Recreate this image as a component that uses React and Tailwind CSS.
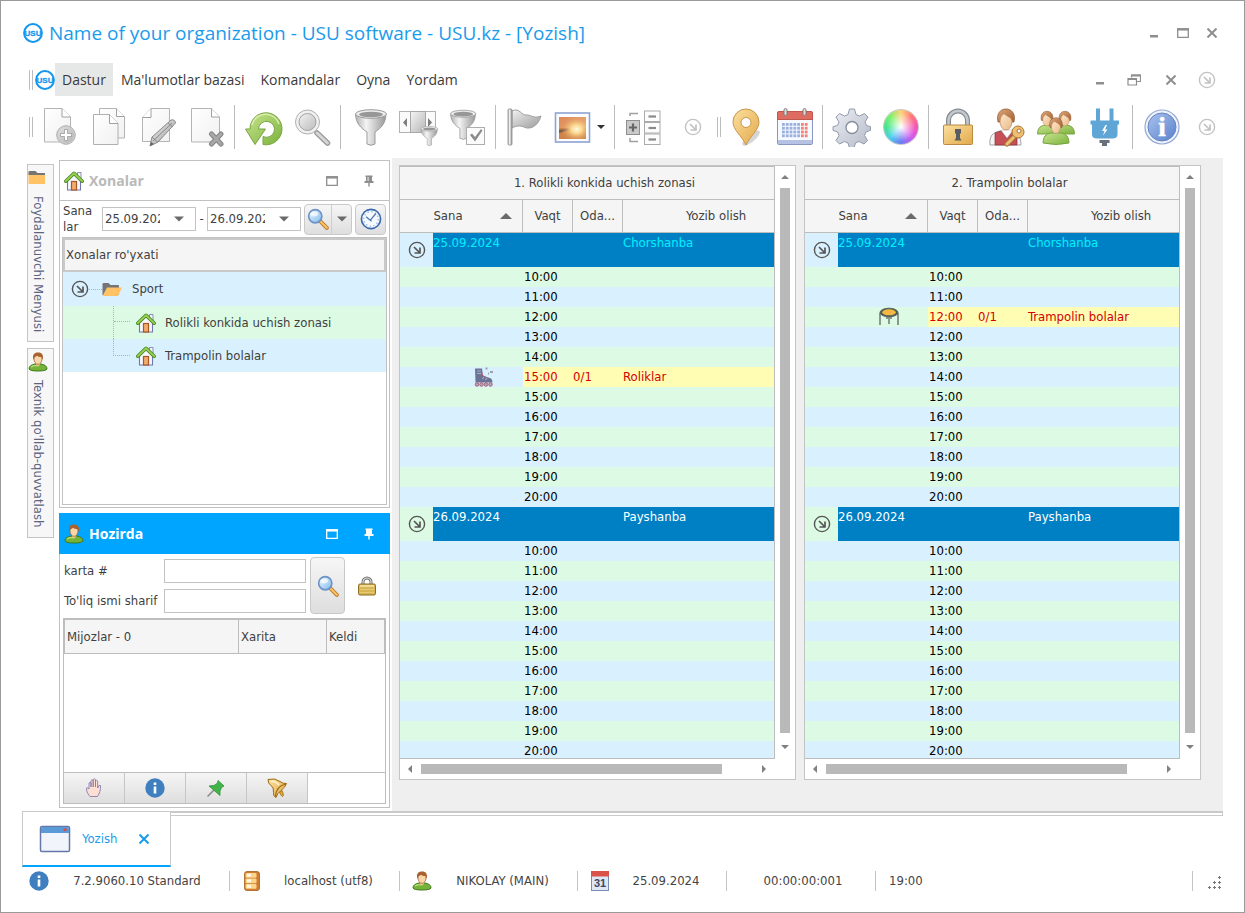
import clsx from "clsx";

const groups = [
  { date: "25.09.2024", day: "Chorshanba", current: true },
  { date: "26.09.2024", day: "Payshanba", current: false }
];

const hours = ["10:00", "11:00", "12:00", "13:00", "14:00", "15:00", "16:00", "17:00", "18:00", "19:00", "20:00"];

const tree = [
  { label: "Rolikli konkida uchish zonasi", color: "bg-[#ddfbe4]" },
  { label: "Trampolin bolalar", color: "bg-[#d9f1ff]" }
];

const INK = "#8e8e8e";

function Logo({ className }) {
  return (
    <svg viewBox="0 0 20 20" className={className}>
      <circle cx="10" cy="10" r="8.900" fill="#fff" stroke="#1397ee" strokeWidth="2" />
      <text x="10" y="13" textAnchor="middle" fontSize="8" fontWeight="700" fontFamily="Liberation Sans, sans-serif" fill="#1397ee" stroke="#1397ee" strokeWidth="0.300">USU</text>
    </svg>
  );
}

// Gradients shared by all the toolbar and panel icons
function Gradients() {
  const list = {
    page: ["#ffffff", "#f1f1f1"],
    steel: ["#f2f2f2", "#9a9a9a"],
    green: ["#c9e58f", "#7bb23c"],
    gold: ["#fbe0a0", "#e3a94a"],
    blue: ["#a9c4ee", "#5a80cc"],
    gear: ["#eceef3", "#b4bac8"],
    glass: ["#f4faff", "#7db9ec"],
    hair: ["#d9a577", "#a86436"],
    skin: ["#ffe9cd", "#e8b988"],
    sky: ["#dd8a5a", "#f3c083"]
  };
  return (
    <defs>
      {Object.entries(list).map(([id, [from, to]]) => (
        <linearGradient key={id} id={id} x1="0" y1="0" x2="1" y2="1">
          <stop offset="0" stopColor={from} />
          <stop offset="1" stopColor={to} />
        </linearGradient>
      ))}
      <linearGradient id="metal" x1="0" x2="1">
        <stop offset="0" stopColor="#b0b0b0" />
        <stop offset="0.35" stopColor="#f4f4f4" />
        <stop offset="1" stopColor="#989898" />
      </linearGradient>
      <radialGradient id="sun" cx="0.65" cy="0.55" r="0.6">
        <stop offset="0" stopColor="#fffbe0" />
        <stop offset="0.35" stopColor="#fbd58c" />
        <stop offset="1" stopColor="#d98250" stopOpacity="0.2" />
      </radialGradient>
    </defs>
  );
}

function Tool({ children }) {
  return <svg viewBox="0 0 40 40" className="h-10 w-10 shrink-0">{children}</svg>;
}

const NewIcon = () => (
  <Tool>
    <path d="M4.500 1.500h17.500l8.500 8.500v25h-26z" fill="url(#page)" stroke="#b4b4b4" />
    <path d="M22 1.500v8.500h8.500" fill="#fff" stroke="#a0a0a0" />
    <circle cx="26" cy="28" r="9.300" fill="#cfcfcf" stroke="#b0b0b0" />
    <circle cx="26" cy="28" r="8" fill="url(#steel)" fillOpacity="0.500" />
    <path d="M24.500 22.500h3v4h4v3h-4v4h-3v-4h-4v-3h4z" fill="#fff" stroke="#9a9a9a" strokeWidth="0.800" />
  </Tool>
);

const CopyIcon = () => (
  <Tool>
    <path d="M10.500 1.500h17l8 8v21.500h-25z" fill="url(#page)" stroke="#b4b4b4" />
    <path d="M27.500 1.500v8h8" fill="#fff" stroke="#a0a0a0" />
    <path d="M4.500 7.500h16l8.500 9v21h-24.500z" fill="url(#page)" stroke="#b0b0b0" />
    <path d="M20.500 7.500v9h8.500" fill="#fff" stroke="#a0a0a0" />
  </Tool>
);

const EditIcon = () => (
  <Tool>
    <path d="M13 1.500h18.500v33h-27v-24z" fill="url(#page)" stroke="#b4b4b4" />
    <path d="M13 1.500v9h-8.500" fill="#fff" stroke="#a0a0a0" />
    <path d="M12 39l2-9 19-17q4-1 4.500 3l-17.500 19z" fill="url(#steel)" stroke="#8a8a8a" />
    <path d="M15 34l19-18M14 30l5.500 5M30 16l5 4" fill="none" stroke="#808080" strokeWidth="0.900" />
    <path d="M12 39l1-4 3 2z" fill="#666" />
  </Tool>
);

const DeleteIcon = () => (
  <Tool>
    <path d="M4.500 1.500h20l8 8.500v25h-28z" fill="url(#page)" stroke="#b4b4b4" />
    <path d="M24.500 1.500v8.500h8" fill="#fff" stroke="#a0a0a0" />
    <path d="M24.500 27l9.500 10M34 27l-9.500 10" stroke="#858585" strokeWidth="5" strokeLinecap="round" />
    <path d="M24.500 27l9.500 10M34 27l-9.500 10" stroke="#a8a8a8" strokeWidth="3" strokeLinecap="round" />
  </Tool>
);

const RefreshIcon = () => (
  <Tool>
    <path d="M6 22A16 16 0 1 1 19 37.500v-8A8 8 0 1 0 14.500 22h7L11 37.500 1.500 22z" fill="url(#green)" stroke="#79a544" strokeLinejoin="round" />
    <path d="M8 18A14 14 0 0 1 35 17" fill="none" stroke="#e3f4bd" strokeWidth="1.500" opacity="0.800" />
  </Tool>
);

const SearchIcon = () => (
  <Tool>
    <path d="M24 26l10.500 10" stroke="#9a9a9a" strokeWidth="5.500" strokeLinecap="round" />
    <path d="M24 26l10.500 10" stroke="#d6d6d6" strokeWidth="3" strokeLinecap="round" />
    <circle cx="14.500" cy="15" r="12" fill="#f0f0f0" stroke="#b0b0b0" />
    <circle cx="14.500" cy="15" r="8.500" fill="url(#steel)" fillOpacity="0.600" stroke="#a2a2a2" />
  </Tool>
);

const FunnelShape = () => (
  <>
    <path d="M5.500 7C6 17 11 21 17 25v12q4 2.500 8 0V25c6-4 10.500-8 11-18z" fill="url(#metal)" stroke="#9b9b9b" />
    <ellipse cx="21" cy="7" rx="15.500" ry="4.300" fill="#ededed" stroke="#9b9b9b" />
    <ellipse cx="21" cy="7.500" rx="12" ry="2.800" fill="#979797" />
  </>
);

const FunnelIcon = () => (
  <Tool>
    <FunnelShape />
  </Tool>
);

const ColumnsFilterIcon = () => (
  <Tool>
    <rect x="0.500" y="4.500" width="36" height="21" fill="#fafafa" stroke="#b2b2b2" />
    <rect x="11.500" y="4.500" width="15" height="21" fill="url(#steel)" fillOpacity="0.700" stroke="#a8a8a8" />
    <path d="M8 11v9l-4-4.500zM29 11v9l4-4.500z" fill="#7d7d7d" />
    <g transform="translate(19 18) scale(0.540)">
      <FunnelShape />
    </g>
  </Tool>
);

const FunnelCheckIcon = () => (
  <Tool>
    <g transform="translate(-2 1) scale(0.820)">
      <FunnelShape />
    </g>
    <rect x="18.500" y="20.500" width="18" height="17" fill="#fbfbfb" stroke="#adadad" />
    <path d="M22 28l2-1.500 3 3.500 6-8 1.500 1.500-7.500 11z" fill="#8c8c8c" />
  </Tool>
);

const FlagIcon = () => (
  <Tool>
    <path d="M7 4c8-4 9 5 15 4 5 0 6 4 14 1-3 11-12 14-17 11-5-2-8-1-12 1z" fill="url(#steel)" stroke="#a0a0a0" />
    <rect x="3" y="2" width="4" height="36" rx="1" fill="url(#metal)" stroke="#8a8a8a" strokeWidth="0.800" />
  </Tool>
);

const ImageIcon = () => (
  <Tool>
    <rect x="2.500" y="6" width="34" height="29" fill="#fdfdff" stroke="#8ea3d3" strokeWidth="1.600" />
    <rect x="6" y="10" width="27" height="22" fill="url(#sky)" />
    <rect x="6" y="21" width="27" height="11" fill="#cb8445" />
    <path d="M6 23q8-3 12 0l-12 3z" fill="#65513f" />
    <rect x="6" y="10" width="27" height="22" fill="url(#sun)" />
  </Tool>
);

const TreeIcon = () => (
  <Tool>
    <path d="M6 9V6.500h8M6 31v3.500h8" fill="none" stroke="#a0a0a0" strokeWidth="1.500" />
    <rect x="2.500" y="13.500" width="13" height="14" fill="#c9c9c9" stroke="#8f8f8f" />
    <path d="M9 16.500v8M5 20.500h8" stroke="#666" strokeWidth="2.200" />
    {[4, 15.5, 27].map(y => (
      <g key={y}>
        <rect x="20.500" y={y} width="15.500" height="10.500" fill="#fdfdfd" stroke="#aaa" />
        <path d={`M24.500 ${y + 5.5}h7.500`} stroke="#8a8a8a" strokeWidth="2.200" />
      </g>
    ))}
  </Tool>
);

const PinMapIcon = () => (
  <Tool>
    <ellipse cx="25" cy="31" rx="11" ry="4" fill="#888" opacity="0.350" transform="rotate(-40 25 31)" />
    <path d="M20 38C16 29 7 23 7 15a13 13 0 0 1 26 0c0 8-9 14-13 23z" fill="url(#gold)" stroke="#c9954a" />
    <circle cx="20" cy="15.500" r="5" fill="#fff" stroke="#c9954a" />
  </Tool>
);

const CalendarIcon = () => (
  <Tool>
    <rect x="2.500" y="4.500" width="35" height="33" rx="1.500" fill="#f6f9ff" stroke="#8996bd" />
    <path d="M2.500 12.500v-6.500q0-1.500 1.500-1.500h32q1.500 0 1.500 1.500v6.500z" fill="#df6c60" stroke="#c0564c" />
    <rect x="3" y="33" width="34" height="4" fill="#b5c2e4" />
    {[8, 27].map(x => (
      <rect key={x} x={x + 1} y="1.500" width="3" height="7" rx="1.500" fill="#ddd" stroke="#777" strokeWidth="0.900" />
    ))}
    {[0, 1, 2, 3].map(r => [0, 1, 2, 3, 4, 5, 6].map(c => (
      <rect key={`${r}${c}`} x={7 + c * 3.8} y={16 + r * 3.8} width="2.800" height="2.800" fill={c > 4 ? "#ef8474" : "#9cb0dd"} />
    )))}
  </Tool>
);

const GearIcon = () => (
  <Tool>
    <path d="M17.500 2h5l1.500 5.500 3.500 1.500 5-2.500 3.500 3.500-3 5 1.500 3.500 4 1.200v3.600l-4.500 1.700-1.500 3.500 3 5-3.500 3.500-5-2.500-3.500 1.500-1.500 5h-4.500l-1.500-5-3.500-1.500-5 2.500-3.500-3.500 3-5-1.500-3.500-4.500-1.700v-3.600l4.500-1.200 1.500-3.500-3-5 3.500-3.500 5 2.500 3.500-1.500z" fill="url(#gear)" stroke="#929aab" strokeLinejoin="round" />
    <circle cx="20" cy="20.500" r="6" fill="#fff" stroke="#848c9e" strokeWidth="1.300" />
  </Tool>
);

const LockIcon = () => (
  <Tool>
    <path d="M10.500 18v-4.500a9.500 9.500 0 0 1 19 0v4.500" fill="none" stroke="#868b92" strokeWidth="5" />
    <path d="M10.500 18v-4.500a9.500 9.500 0 0 1 19 0v4.500" fill="none" stroke="#c3c8ce" strokeWidth="2.500" />
    <rect x="5.500" y="18" width="29" height="19.500" rx="1" fill="url(#gold)" stroke="#b98a3f" />
    <path d="M17 22h6v4l-1 1v4l1.500 2.500h-7l1.500-2.500v-4l-1-1z" fill="#595c60" />
  </Tool>
);

const Head = ({ x, y, s = 1 }) => (
  <g transform={`translate(${x} ${y}) scale(${s})`}>
    <path d="M-8 2C-10-7-5-11 0-11S10-7 8 2z" fill="url(#hair)" stroke="#915a32" strokeWidth="0.800" />
    <ellipse cx="0" cy="1.500" rx="6" ry="8.500" fill="url(#skin)" stroke="#b48357" strokeWidth="0.700" />
    <path d="M-7 1C-7-3-5-4-2-6 1-3 5-3 6.500 1 8.500-5 6-10 0-10S-9-6-7 1z" fill="url(#hair)" />
  </g>
);

const UserKeyIcon = () => (
  <Tool>
    <path d="M3 38c-1-9 3-13 10-14h12c6 1 9 6 9 14z" fill="#f4f4f6" stroke="#a3a3aa" />
    <path d="M8 38v-12l6-2 6 7 6-7 4 2v12z" fill="#c64e57" stroke="#8d2e36" strokeWidth="0.700" />
    <path d="M14 23l6 8 6-8z" fill="#fff" stroke="#bbb" strokeWidth="0.600" />
    <Head x={19} y={13} />
    <path d="M20 37l9-9" stroke="#a97632" strokeWidth="5" strokeLinecap="round" />
    <path d="M20 37l9-9" stroke="#eebf74" strokeWidth="3" strokeLinecap="round" />
    <circle cx="31" cy="25" r="6" fill="#eebf74" stroke="#a97632" />
    <circle cx="32" cy="24" r="2" fill="#fff" stroke="#a97632" />
  </Tool>
);

const UsersIcon = () => (
  <Tool>
    <path d="M1.500 27q0-9 9-9t9 9zM20.500 27q0-9 9-9t9 9z" fill="url(#green)" stroke="#79a544" />
    <Head x={11} y={12} s={0.7} />
    <Head x={29} y={12} s={0.7} />
    <path d="M7 36q0-9 8-10h10q8 1 8 10-13 3-26 0z" fill="url(#green)" stroke="#79a544" />
    <Head x={20} y={19} s={0.75} />
  </Tool>
);

const PlugIcon = () => (
  <Tool>
    <path d="M11 1.500h4v12h9.500v-12h4v12h5.500v4h-1.500v10q0 4-5 4h-15.500q-5 0-5-4v-10h-1.500v-4h5.500z" fill="#5fa5d5" />
    <path d="M14.500 33h10v3h-2.500v3h-5v-3h-2.500z" fill="#66717b" />
    <path d="M20.500 18l-3.500 6h2.500l-1.500 4.500 4.500-6h-2.500l2-4.500z" fill="#fff" />
  </Tool>
);

const InfoIcon = () => (
  <Tool>
    <circle cx="20" cy="20" r="17" fill="#eff3fb" stroke="#94a9d6" strokeWidth="1.200" />
    <circle cx="20" cy="20" r="14" fill="url(#blue)" stroke="#6684c2" />
    <text x="20" y="29" textAnchor="middle" fontSize="27" fontWeight="700" fontFamily="Liberation Serif, serif" fill="#fff" stroke="#fff" strokeWidth="0.600">i</text>
  </Tool>
);

const ColorWheel = () => (
  <span className="h-9 w-9 rounded-full border border-[#c9c9c9] bg-[radial-gradient(circle,white_0%,transparent_60%),conic-gradient(#ffd27a,#f77,#f455b8,#d05cf0,#6b7cf5,#4cd0ee,#46e58e,#7cf36a,#ffd27a)]" />
);

function ExpandCircle({ className, color = "#c2c2c2" }) {
  return (
    <svg viewBox="0 0 18 18" className={clsx("h-[18px] w-[18px] shrink-0", className)} fill="none" stroke={color}>
      <circle cx="9" cy="9" r="7.600" strokeWidth="1.400" />
      <path d="M6 6l5.500 5.500M12 6.500V12H6.500" strokeWidth="1.700" />
    </svg>
  );
}

function Small({ className = "h-5 w-5", children }) {
  return <svg viewBox="0 0 20 20" className={clsx("shrink-0", className)}>{children}</svg>;
}

const HouseIcon = () => (
  <Small>
    <path d="M13.500 1.500h3.500v7l-3.500-3z" fill="#f4f4fb" stroke="#7f83ae" strokeWidth="0.900" />
    <path d="M3.500 9.500l6.500-6 6.500 6v9.500h-13z" fill="#f7f8fd" stroke="#6f77ad" strokeWidth="1.100" />
    <rect x="7.500" y="10.500" width="5" height="8.500" fill="#efae6c" stroke="#a9552a" strokeWidth="1.200" />
    <path d="M1.800 10.200L10 2.300l8.200 7.900" fill="none" stroke="#4b8a24" strokeWidth="3.600" strokeLinejoin="round" strokeLinecap="round" />
    <path d="M1.800 10.200L10 2.300l8.200 7.900" fill="none" stroke="#9ad054" strokeWidth="1.800" strokeLinecap="round" />
  </Small>
);

const UserIcon = () => (
  <Small>
    <path d="M1 17q0-4 6-5h6q6 1 6 5-1 2-9 2t-9-2z" fill="#74b238" stroke="#3f7a1e" />
    <path d="M3 15q3-2 7-1" stroke="#b9e07d" strokeWidth="1.200" fill="none" />
    <path d="M8 10h4v3l-2 1.500-2-1.500z" fill="#f0c18e" />
    <ellipse cx="10" cy="7" rx="4" ry="5.300" fill="#f9d6aa" stroke="#9c5b2d" strokeWidth="0.700" />
    <path d="M5.500 8C4 3 6 0.500 10 0.500S16 3 14.500 8L13.500 5Q11 5.500 9 3.800 7.500 5 6.500 5z" fill="#a8612f" />
  </Small>
);

const FolderIcon = ({ open }) => (
  <Small>
    <path d="M0.500 16V5q0-1 1-1h5l2 2H16q1 0 1 1v9z" fill={open ? "#757575" : "#ffc265"} />
    {open
      ? <path d="M0.500 17L5 8.500h15L16 17z" fill="#ffc265" />
      : <path d="M0.500 7V4q0-1 1-1h6l2 2H17v2z" fill="#757575" />}
  </Small>
);

const LensIcon = () => (
  <Small className="h-[22px] w-[22px]">
    <path d="M12 12l6 6" stroke="#b7772b" strokeWidth="3.600" strokeLinecap="round" />
    <path d="M12.500 12.500l5.500 5.500" stroke="#fbc163" strokeWidth="2" strokeLinecap="round" />
    <circle cx="7.500" cy="7.500" r="6" fill="url(#glass)" stroke="#6c92c6" strokeWidth="1.500" />
    <ellipse cx="6.500" cy="5.500" rx="3.500" ry="2.200" fill="#fff" opacity="0.700" />
  </Small>
);

const ClockIcon = () => (
  <Small className="h-[22px] w-[22px]">
    <circle cx="10" cy="10" r="8.700" fill="#f5faff" stroke="#3c69ae" strokeWidth="1.500" />
    <circle cx="10" cy="10" r="6.600" fill="none" stroke="#9dbde3" strokeWidth="1.400" strokeDasharray="1.200 2.256" />
    <path d="M14.500 5L9 11.500M5.500 8l5 4" stroke="#5378b8" strokeWidth="1.200" />
  </Small>
);

const SmallLockIcon = () => (
  <Small>
    <path d="M6 9V6a4 4 0 0 1 8 0V9" fill="none" stroke="#6e6e6e" strokeWidth="3" />
    <path d="M6 9V6a4 4 0 0 1 8 0V9" fill="none" stroke="#e0e0e0" strokeWidth="1.200" />
    <rect x="1.500" y="8" width="17" height="11" rx="1.500" fill="#d8b654" stroke="#8a6c22" />
    <path d="M3 10h14" stroke="#f6e6ac" strokeWidth="1.600" />
    <path d="M3 13.500h14M3 16.500h14" stroke="#e8cd7c" strokeWidth="0.900" />
  </Small>
);

const HandIcon = () => (
  <Small>
    <path d="M6 18.500C3 15 2.500 13 2.500 10q1.500-1 2.500 1V5q1-1.500 2 0V9 2.500q1.200-1.500 2.200 0V9 1.500q1.200-1.500 2.300 0V9 3q1.200-1.500 2.200 0v7q1-3.500 2.800-2.500c.5 4-1 8-3 11z" fill="#fbdfd3" stroke="#8a7cae" strokeWidth="0.900" />
  </Small>
);

const BlueInfoIcon = () => (
  <Small>
    <circle cx="10" cy="10" r="9.700" fill="#3f7fbf" />
    <path d="M8.700 8.500h2.600v7H8.700zM8.700 4.500h2.600v2.500H8.700z" fill="#fff" />
  </Small>
);

const GreenPinIcon = () => (
  <Small>
    <path d="M1.500 18.500l6.500-6.500" stroke="#8b8b8b" strokeWidth="1.600" />
    <path d="M12 2.500l6 5.500-2.500 1.500-1.500 3.500v4.500L3 8l5-.5 3.500-2.500z" fill="#43b449" stroke="#2d9338" strokeWidth="0.800" />
  </Small>
);

const BellIcon = () => (
  <Small>
    <path d="M1 1.500Q8-0.500 13 3.500q3 2.500 6.500 2-1 3.500-5.500 7-4 3-5 7-3-1-2.500-5Q7 9 4 7.500 1 5.500 1 1.500z" fill="url(#gold)" stroke="#9a6a14" />
    <path d="M19 6Q9 8 8.500 18.500" fill="none" stroke="#9a6a14" strokeWidth="1.100" />
    <path d="M12.500 14q1 3.500 3 4.500 1.500-1 .5-3.500l-1-2.500z" fill="#e8a82f" stroke="#9a6a14" strokeWidth="0.800" />
    <path d="M3.500 3.500Q8 2.500 12 7" stroke="#fff4cb" strokeWidth="1.500" fill="none" />
  </Small>
);

const DatabaseIcon = () => (
  <Small>
    <rect x="2.500" y="0.500" width="15" height="19" rx="2.500" fill="#cf7d33" stroke="#a5611f" strokeWidth="0.800" />
    {[2, 7.5, 13].map(y => (
      <g key={y}>
        <rect x="3.500" y={y} width="11" height="4.800" rx="1" fill="#ffd58c" />
        <rect x="5" y={y + 0.8} width="4" height="3" fill="#fff8e2" />
      </g>
    ))}
  </Small>
);

const DayIcon = () => (
  <Small>
    <rect x="1.500" y="0.500" width="17" height="19" fill="#dfe6f5" stroke="#7c8bb5" />
    <rect x="1" y="0" width="18" height="5.500" fill="#d9534a" />
    <text x="10" y="16" textAnchor="middle" fontSize="11" fontWeight="700" fontFamily="Liberation Sans, sans-serif" fill="#3b4662">31</text>
  </Small>
);

const SkateIcon = () => (
  <Small>
    <path d="M1 1.500h7l1 7 8 3q1.500 1 1.500 4H1.500z" fill="#6a7396" />
    <path d="M3 4h4M3 6.500h5M10 10l-1.500 2M13 11l-1.500 2" stroke="#a6afc8" strokeWidth="1.200" />
    <path d="M7 5l2 4 3 2" stroke="#c8545f" fill="none" />
    {[3, 7.5, 12, 16.5].map(x => (
      <circle key={x} cx={x} cy="17.500" r="1.800" fill="#b7a3b5" stroke="#a25168" strokeWidth="0.800" />
    ))}
    <path d="M11.500 1.500h2M16 5h3M14 6.500h1" stroke="#9aa1b3" strokeWidth="2" />
  </Small>
);

const TrampolineIcon = () => (
  <Small>
    <path d="M1 18V6M19 18V6M10 17V9M8 9v3M12 9v3" stroke="#68706c" strokeWidth="1.400" fill="none" />
    <ellipse cx="10" cy="5.500" rx="9" ry="4.300" fill="#4c5a55" stroke="#56625e" />
    <ellipse cx="10" cy="5.300" rx="6.800" ry="3" fill="#f5b843" />
  </Small>
);

const WindowIcon = () => (
  <svg viewBox="0 0 32 28" className="h-7 w-8 shrink-0">
    <rect x="1.500" y="1.500" width="29" height="25" rx="1.500" fill="#f1f4fb" stroke="#6577a8" strokeWidth="1.500" />
    <path d="M2 8V3.500Q2 2 3.500 2h25Q30 2 30 3.500V8z" fill="#5a9ad6" />
    <rect x="24.500" y="3.500" width="3" height="2.500" fill="#e3493c" />
  </svg>
);

const BoxGlyph = ({ color = INK }) => (
  <svg viewBox="0 0 12 10" className="h-[10px] w-3" fill="none" stroke={color}>
    <path d="M0.700 1v8.300h10.600V1" strokeWidth="1.300" />
    <path d="M0 1.300h12" strokeWidth="2.500" />
  </svg>
);

const PinGlyph = ({ color = INK }) => (
  <svg viewBox="0 0 10 12" className="h-3 w-[10px]" fill={color}>
    <path d="M1.500 0.500h7v1.500H8v4h1.500V8H5.700v3.500H4.300V8H0.500V6H2V2h-.5z" />
    <path d="M3.500 2h1.200v4H3.500z" fill="#fff" fillOpacity="0.700" />
  </svg>
);

const CrossGlyph = ({ color = INK }) => (
  <svg viewBox="0 0 10 10" className="h-[10px] w-[10px]" stroke={color} strokeWidth="2">
    <path d="M0.500 0.500l9 9M9.500 0.500l-9 9" />
  </svg>
);

const MinusGlyph = () => (
  <svg viewBox="0 0 10 10" className="h-[10px] w-[10px]">
    <path d="M1 7h8v2.500H1z" fill={INK} />
  </svg>
);

const RestoreGlyph = () => (
  <svg viewBox="0 0 14 12" className="h-3 w-[14px]" fill="none" stroke={INK} strokeWidth="1.200">
    <path d="M4.500 3.500V1h9v6.500H10" />
    <path d="M4.500 1.500h9M1 5h8.500" strokeWidth="2" />
    <path d="M1 4.500h8.500v6.500H1z" />
  </svg>
);

const arrows = {
  up: "M0 6l4-4 4 4z",
  down: "M0 2l4 4 4-4z",
  left: "M6 0L2 4l4 4z",
  right: "M2 0l4 4-4 4z"
};

function Arrow({ dir, className = "h-2 w-2", color = "#808080" }) {
  return (
    <svg viewBox="0 0 8 8" className={clsx("shrink-0", className)}>
      <path d={arrows[dir]} fill={color} />
    </svg>
  );
}

const toolbar = [
  { name: "New", icon: <NewIcon /> },
  { name: "Copy", icon: <CopyIcon /> },
  { name: "Edit", icon: <EditIcon /> },
  { name: "Delete", icon: <DeleteIcon /> },
  "sep",
  { name: "Refresh", icon: <RefreshIcon /> },
  { name: "Search", icon: <SearchIcon /> },
  "sep",
  { name: "Filter", icon: <FunnelIcon /> },
  { name: "Filter columns", icon: <ColumnsFilterIcon /> },
  { name: "Saved filter", icon: <FunnelCheckIcon /> },
  "sep",
  { name: "Flag", icon: <FlagIcon /> },
  { name: "Image", icon: <ImageIcon />, menu: true },
  "sep",
  { name: "Expand tree", icon: <TreeIcon /> },
  { name: "More", icon: <ExpandCircle /> },
  "grip",
  { name: "Map", icon: <PinMapIcon /> },
  { name: "Calendar", icon: <CalendarIcon /> },
  "sep",
  { name: "Settings", icon: <GearIcon /> },
  { name: "Colors", icon: <ColorWheel /> },
  "sep",
  { name: "Lock", icon: <LockIcon /> },
  { name: "Access", icon: <UserKeyIcon /> },
  { name: "Users", icon: <UsersIcon /> },
  { name: "Connection", icon: <PlugIcon /> },
  "sep",
  { name: "Info", icon: <InfoIcon /> }
];

const Grip = ({ className }) => <span className={clsx("w-[4px] shrink-0 border-x border-[#bdbdbd]", className)} />;

function TitleBar() {
  return (
    <header className="flex h-[62px] shrink-0 items-center pl-[22px] pr-[27px] pt-[2px]">
      <svg className="h-0 w-0"><Gradients /></svg>
      <Logo className="mr-[6px] h-5 w-5" />
      <h1 className="flex-1 font-['Open_Sans',sans-serif] text-[19px] leading-6 text-[#1a9bec]">
        Name of your organization - USU software - USU.kz - [Yozish]
      </h1>
      <div className="flex items-center gap-[18px]">
        <button aria-label="Minimize"><MinusGlyph /></button>
        <button aria-label="Maximize"><BoxGlyph /></button>
        <button aria-label="Close"><CrossGlyph /></button>
      </div>
    </header>
  );
}

function MenuBar() {
  return (
    <nav className="flex h-[33px] shrink-0 items-center pl-7 pr-[28px] font-['Open_Sans',sans-serif] text-sm text-[#3a3a3a]">
      <Grip className="mr-[2px] h-5" />
      <Logo className="h-5 w-5" />
      <button className="h-full bg-[#e6e8e8] px-[7px]">Dastur</button>
      <button className="h-full px-2">Ma'lumotlar bazasi</button>
      <button className="h-full px-2">Komandalar</button>
      <button className="h-full px-2">Oyna</button>
      <button className="h-full px-2">Yordam</button>
      <div className="ml-auto flex items-center gap-[22px]">
        <button aria-label="Minimize document"><MinusGlyph /></button>
        <button aria-label="Restore document"><RestoreGlyph /></button>
        <button aria-label="Close document" className="ml-[3px]"><CrossGlyph /></button>
        <button aria-label="Menu options"><ExpandCircle /></button>
      </div>
    </nav>
  );
}

function Toolbar() {
  return (
    <div className="flex h-[62px] shrink-0 items-center pl-7 pr-[28px]">
      <Grip className="mr-[2px] h-5" />
      {toolbar.map((item, i) => {
        if (item === "sep") return <span key={i} className="ml-[3px] mr-1 h-11 w-px shrink-0 bg-[#bcbcbc]" />;
        if (item === "grip") return <Grip key={i} className="h-5" />;
        return (
          <button key={i} aria-label={item.name} className={clsx("flex h-12 shrink-0 items-center", item.menu ? "w-[62px] gap-1 pl-1" : "w-[49px] justify-center")}>
            {item.icon}
            {item.menu && <Arrow dir="down" color="#333" />}
          </button>
        );
      })}
      <button aria-label="More buttons" className="ml-auto"><ExpandCircle /></button>
    </div>
  );
}

function SideTabs() {
  return (
    <div className="flex w-[27px] shrink-0 flex-col gap-[6px] pt-[6px] text-[13px] text-[#5d6480]">
      <button className="flex h-[178px] w-[27px] flex-col items-start border border-[#c4c4c4] bg-[#f7f7f7] pt-[3px]">
        <FolderIcon />
        <span className="mt-2 whitespace-nowrap [writing-mode:vertical-rl]">Foydalanuvchi Menyusi</span>
      </button>
      <button className="flex h-[190px] w-[27px] flex-col items-start border border-[#c4c4c4] bg-[#f7f7f7] pt-[3px]">
        <UserIcon />
        <span className="mt-2 whitespace-nowrap [writing-mode:vertical-rl]">Texnik qo'llab-quvvatlash</span>
      </button>
    </div>
  );
}

function DateField({ id, label, value }) {
  return (
    <div className="flex h-6 w-[94px] items-center border border-[#c3c3c3] bg-white px-[2px]">
      <input id={id} aria-label={label} defaultValue={value} className="w-[55px] min-w-0 bg-transparent outline-none" />
      <button aria-label="Open calendar" className="flex flex-1 justify-center pl-1"><Arrow dir="down" className="h-[10px] w-[10px]" color="#6a6a6a" /></button>
    </div>
  );
}

function RoomsPanel() {
  return (
    <section className="flex min-h-0 flex-1 flex-col border border-[#c1c1c1] bg-white">
      <div className="flex h-[39px] shrink-0 items-center pl-1 pr-[15px]">
        <HouseIcon />
        <h2 className="ml-[5px] flex-1 font-['Open_Sans',sans-serif] text-sm font-bold text-[#b9b9b9]">Xonalar</h2>
        <button aria-label="Maximize panel"><BoxGlyph /></button>
        <button aria-label="Pin panel" className="ml-[26px]"><PinGlyph /></button>
      </div>
      <div className="flex h-[37px] shrink-0 items-center overflow-hidden border-t border-[#c1c1c1] pl-[3px]">
        <label htmlFor="from" className="w-[39px] shrink-0 leading-4">Sana lar</label>
        <DateField id="from" label="Sanadan" value="25.09.2024" />
        <span className="w-[11px] shrink-0 text-center">-</span>
        <DateField id="to" label="Sanagacha" value="26.09.2024" />
        <div className="ml-[3px] flex h-[31px] shrink-0 rounded-sm border border-[#c9c9c9] bg-linear-to-b from-[#f6f6f6] to-[#dedede]">
          <button aria-label="Qidirish" className="flex w-[27px] items-center justify-center border-r border-[#cfcfcf]"><LensIcon /></button>
          <button aria-label="Qidirish menyusi" className="flex w-[19px] items-center justify-center"><Arrow dir="down" className="h-[10px] w-[10px]" color="#6a6a6a" /></button>
        </div>
        <button aria-label="Vaqt" className="ml-[3px] flex h-[31px] w-[31px] shrink-0 items-center justify-center rounded-sm border border-[#c9c9c9] bg-linear-to-b from-[#f6f6f6] to-[#dedede]"><ClockIcon /></button>
      </div>
      <div className="mx-[2px] mb-[2px] min-h-0 flex-1 border border-[#c1c1c1]">
        <div className="flex h-[34px] items-center border-2 border-[#c9c9c9] bg-[#f5f5f5] px-px">Xonalar ro'yxati</div>
        <ul>
          <li>
            <div className="flex h-[34px] items-center bg-[#d9f1ff] pl-2">
              <ExpandCircle color="#555" />
              <span className="w-[13px] border-t border-dotted border-[#a9b4ba]" />
              <FolderIcon open />
              <span className="ml-[10px]">Sport</span>
            </div>
            <ul>
              {tree.map((node, i) => (
                <li key={node.label} className={clsx("flex h-[33px] items-center pl-[50px]", node.color)}>
                  <span className={clsx("w-[17px] self-stretch border-l border-dotted border-[#a9b4ba]", i === tree.length - 1 && "mb-4 border-b")}>
                    {i < tree.length - 1 && <span className="block h-4 border-b border-dotted border-[#a9b4ba]" />}
                  </span>
                  <span className="ml-[6px]"><HouseIcon /></span>
                  <span className="ml-[9px]">{node.label}</span>
                </li>
              ))}
            </ul>
          </li>
        </ul>
      </div>
    </section>
  );
}

function NowPanel() {
  const actions = [
    { name: "To'xtatish", icon: <HandIcon /> },
    { name: "Ma'lumot", icon: <BlueInfoIcon /> },
    { name: "Biriktirish", icon: <GreenPinIcon /> },
    { name: "Eslatma", icon: <BellIcon /> }
  ];
  return (
    <section className="flex h-[295px] shrink-0 flex-col border border-[#c1c1c1] bg-white">
      <div className="-mx-px -mt-px flex h-[41px] shrink-0 items-center bg-[#00a5ff] pl-[5px] pr-4 text-white">
        <UserIcon />
        <h2 className="ml-[5px] flex-1 font-['Open_Sans',sans-serif] text-sm font-bold">Hozirda</h2>
        <button aria-label="Maximize panel"><BoxGlyph color="#fff" /></button>
        <button aria-label="Pin panel" className="ml-[26px]"><PinGlyph color="#fff" /></button>
      </div>
      <div className="flex items-start px-1 pt-[3px]">
        <div className="grid grid-cols-[100px_142px] items-center gap-y-[6px] pt-[2px]">
          <label htmlFor="card">karta #</label>
          <input id="card" className="h-6 border border-[#c3c3c3] px-1 outline-none" />
          <label htmlFor="name" className="whitespace-nowrap">To'liq ismi sharif</label>
          <input id="name" className="h-6 border border-[#c3c3c3] px-1 outline-none" />
        </div>
        <button aria-label="Qidirish" className="ml-1 flex h-[57px] w-[35px] items-center justify-center rounded-sm border border-[#c9c9c9] bg-linear-to-b from-[#f6f6f6] to-[#dedede]"><LensIcon /></button>
        <button aria-label="Bloklash" className="ml-3 flex h-[57px] items-center"><SmallLockIcon /></button>
      </div>
      <div className="mx-[3px] mt-1 min-h-0 flex-1 border border-[#bdbdbd]">
        <table className="w-full table-fixed border-collapse">
          <thead>
            <tr className="h-[34px] bg-[#f5f5f5] text-left">
              <th className="w-[174px] border border-[#bdbdbd] px-[2px] font-normal">Mijozlar - 0</th>
              <th className="w-[88px] border border-[#bdbdbd] px-[2px] font-normal">Xarita</th>
              <th className="border border-[#bdbdbd] px-[2px] font-normal">Keldi</th>
            </tr>
          </thead>
        </table>
      </div>
      <div className="mx-[3px] mb-[3px] flex h-[31px] shrink-0 border border-t-0 border-[#bdbdbd]">
        {actions.map(action => (
          <button key={action.name} aria-label={action.name} className="flex w-[61px] items-center justify-center border-r border-[#c6c6c6] bg-linear-to-b from-[#f5f5f5] to-[#dedede]">
            {action.icon}
          </button>
        ))}
      </div>
    </section>
  );
}

function ScheduleRows({ bookAt, bookTitle, bookIcon }) {
  const rows = [];
  let stripe = 0;
  const next = () => (stripe++ % 2 === 0 ? "bg-[#d9f1ff]" : "bg-[#ddfbe4]");

  groups.forEach(group => {
    const color = group.current ? "text-[#00f0ff]" : "text-white";
    rows.push(
      <tr key={group.date} className={clsx("h-[34px]", next())}>
        <td className="w-[33px] p-0 pl-2 align-middle">
          <button aria-label={`Yopish ${group.date}`} className="flex"><ExpandCircle color="#555" /></button>
        </td>
        <td colSpan={3} className={clsx("bg-[#0080c4] p-0 align-top leading-5", color)}>{group.date}</td>
        <td className={clsx("bg-[#0080c4] p-0 align-top leading-5", color)}>{group.day}</td>
      </tr>
    );
    hours.forEach(hour => {
      if (group.current && hour === bookAt) {
        rows.push(
          <tr key={group.date + hour + "b"} className={clsx("h-5 leading-5 text-[#d40000]", next())}>
            <td className="p-0" />
            <td className="p-0 pl-[41px]"><span className="flex">{bookIcon}</span></td>
            <td className="bg-[#fffcb4] p-0 pl-px">{hour}</td>
            <td className="bg-[#fffcb4] p-0">0/1</td>
            <td className="bg-[#fffcb4] p-0">{bookTitle}</td>
          </tr>
        );
      }
      rows.push(
        <tr key={group.date + hour} className={clsx("h-5 leading-5 text-black", next())}>
          <td className="p-0" />
          <td className="p-0" />
          <td className="p-0 pl-px">{hour}</td>
          <td className="p-0" />
          <td className="p-0" />
        </tr>
      );
    });
  });
  return <tbody>{rows}</tbody>;
}

function Schedule({ title, bookAt, bookTitle, bookIcon }) {
  return (
    <section className="grid w-[397px] shrink-0 grid-cols-[minmax(0,1fr)_20px] grid-rows-[minmax(0,1fr)_20px] border border-[#c4c4c4] bg-white">
      <div className="overflow-hidden border-b border-r border-[#bdbdbd]">
        <table className="w-[409px] table-fixed border-separate border-spacing-0">
          <colgroup>
            <col className="w-[33px]" />
            <col className="w-[90px]" />
            <col className="w-[50px]" />
            <col className="w-[50px]" />
            <col className="w-[186px]" />
          </colgroup>
          <thead>
            <tr className="h-[34px] bg-[#f5f5f5]">
              <th colSpan={5} className="border-b border-t border-[#bdbdbd] p-0 font-normal">{title}</th>
            </tr>
            <tr className="h-[33px] bg-[#f5f5f5]">
              <th colSpan={2} className="border-b border-r border-[#bdbdbd] p-0 font-normal">
                <span className="flex items-center pr-[10px]">
                  <span className="flex-1 pr-1">Sana</span>
                  <Arrow dir="up" className="h-3 w-3" color="#6a6a6a" />
                </span>
              </th>
              <th className="border-b border-r border-[#bdbdbd] p-0 font-normal">Vaqt</th>
              <th className="border-b border-r border-[#bdbdbd] p-0 font-normal">Oda...</th>
              <th className="border-b border-[#bdbdbd] p-0 font-normal">Yozib olish</th>
            </tr>
          </thead>
          <ScheduleRows bookAt={bookAt} bookTitle={bookTitle} bookIcon={bookIcon} />
        </table>
      </div>
      <div className="flex flex-col items-center pb-2 pt-[7px]">
        <Arrow dir="up" />
        <span className="mb-[10px] mt-[7px] w-[10px] flex-1 bg-[#b9b9b9]" />
        <Arrow dir="down" />
      </div>
      <div className="flex items-center pl-[6px] pr-[7px]">
        <Arrow dir="left" />
        <span className="ml-[7px] mr-[38px] h-[10px] flex-1 bg-[#b9b9b9]" />
        <Arrow dir="right" />
      </div>
    </section>
  );
}

function DocumentTabs() {
  return (
    <div className="mx-[21px] h-14 shrink-0">
      <div className="flex items-start">
        <div className="flex h-14 w-[149px] items-center border-x border-b-2 border-t border-[#c9c9c9] border-b-[#00a5ff] bg-white pl-4">
          <WindowIcon />
          <a href="#yozish" className="ml-[11px] text-[#1a9bec]">Yozish</a>
          <button aria-label="Close tab" className="ml-[22px]"><CrossGlyph color="#1a9bec" /></button>
        </div>
        <div className="h-[5px] flex-1 border-b border-r border-t-2 border-[#c9c9c9]" />
      </div>
    </div>
  );
}

function StatusCell({ width, icon, children }) {
  return (
    <div className={clsx("flex items-center border-r border-[#c4c4c4] pr-1", width)}>
      {icon}
      <span className="flex-1 text-center">{children}</span>
    </div>
  );
}

function StatusBar() {
  return (
    <footer className="flex h-[45px] shrink-0 items-start pl-7 pr-[22px] pt-1 text-[#444]">
      <div className="flex h-5 flex-1">
        <StatusCell width="w-[201px]" icon={<BlueInfoIcon />}>7.2.9060.10 Standard</StatusCell>
        <StatusCell width="w-[170px] pl-3" icon={<DatabaseIcon />}>localhost (utf8)</StatusCell>
        <StatusCell width="w-[178px] pl-3" icon={<UserIcon />}>NIKOLAY (MAIN)</StatusCell>
        <StatusCell width="w-[149px] pl-3" icon={<DayIcon />}>25.09.2024</StatusCell>
        <StatusCell width="w-[149px] pl-2">00:00:00:001</StatusCell>
        <span className="flex flex-1 items-center border-r border-[#c4c4c4] pl-[13px]">19:00</span>
      </div>
      <svg viewBox="0 0 16 16" className="ml-[13px] mt-1 h-4 w-4" fill="#777">
        {[[13, 1], [8, 6], [13, 6], [3, 11], [8, 11], [13, 11]].map(([x, y]) => (
          <path key={`${x}-${y}`} d={`M${x} ${y}h1v1h1v1h-1v1h-1v-1h-1v-1h1z`} />
        ))}
      </svg>
    </footer>
  );
}

export default function App() {
  return (
    <div className="flex h-screen flex-col border border-[#9a9a9a] bg-white font-['DejaVu_Sans_Condensed','Noto_Sans',sans-serif] text-[13px] text-[#3f3f3f]">
      <TitleBar />
      <MenuBar />
      <Toolbar />
      <main className="flex min-h-0 flex-1 pl-[26px] pr-[21px]">
        <SideTabs />
        <div className="mb-[3px] ml-[5px] mr-[2px] mt-[2px] flex w-[331px] shrink-0 flex-col gap-[5px]">
          <RoomsPanel />
          <NowPanel />
        </div>
        <div className="flex flex-1 gap-2 bg-[#efefef] pb-[31px] pl-[7px] pt-[7px]">
          <Schedule title="1. Rolikli konkida uchish zonasi" bookAt="15:00" bookTitle="Roliklar" bookIcon={<SkateIcon />} />
          <Schedule title="2. Trampolin bolalar" bookAt="12:00" bookTitle="Trampolin bolalar" bookIcon={<TrampolineIcon />} />
        </div>
      </main>
      <DocumentTabs />
      <StatusBar />
    </div>
  );
}
